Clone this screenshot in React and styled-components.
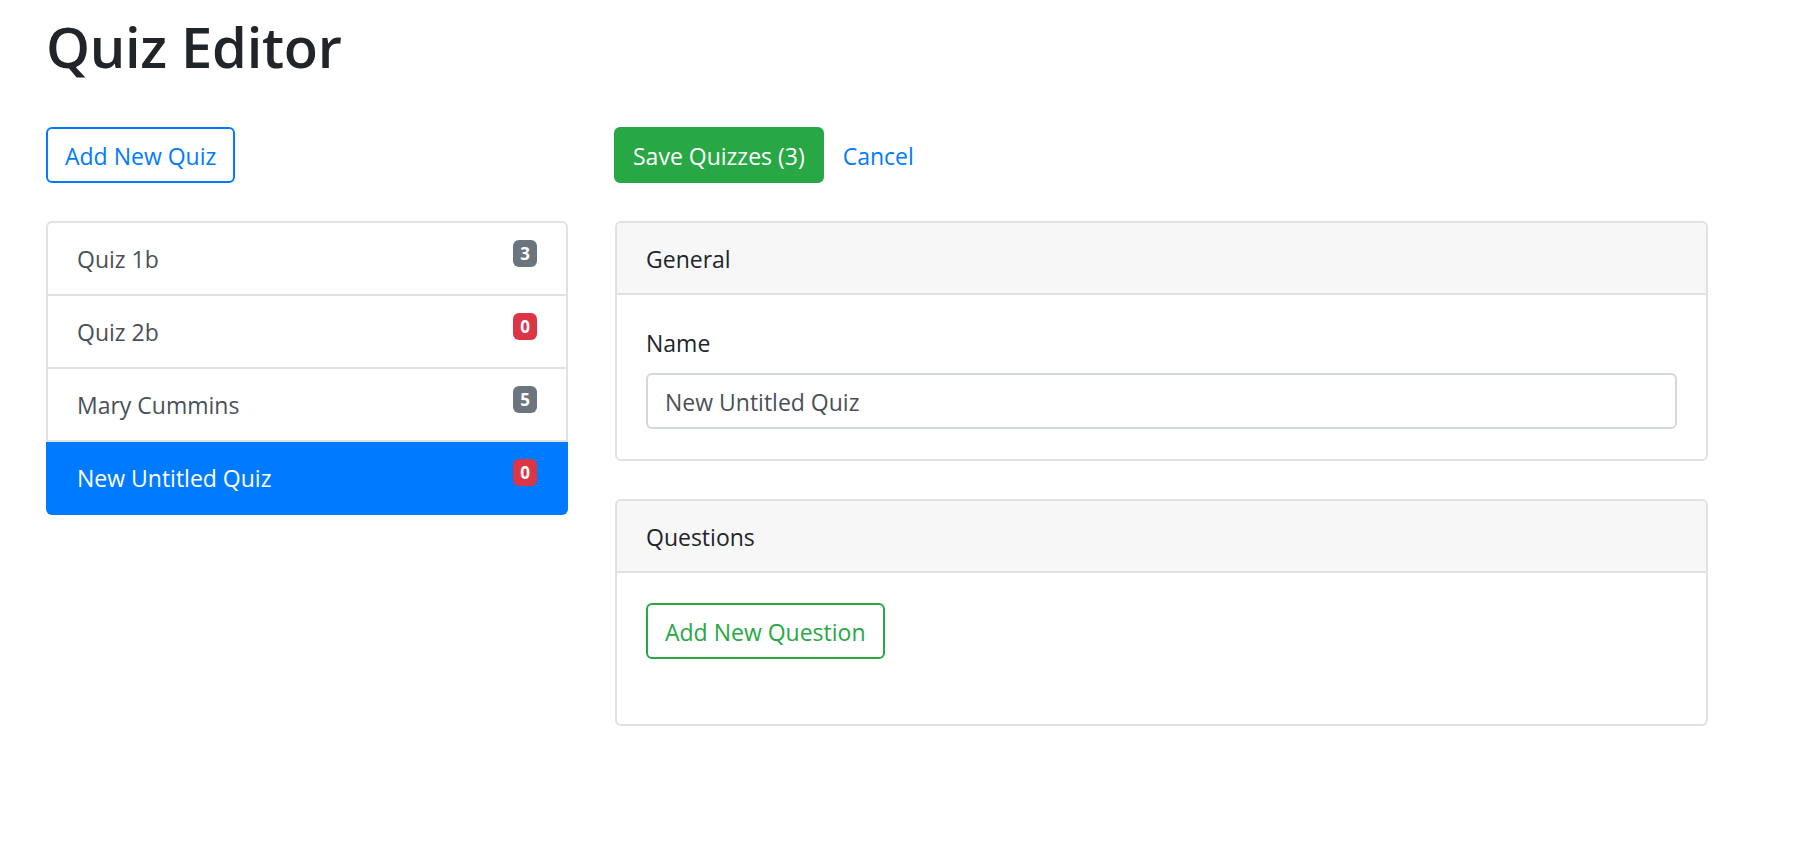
import React, { useState } from 'react'
import styled, { createGlobalStyle, css } from 'styled-components'

const GlobalStyle = createGlobalStyle`
    body {
        margin: 0;
        background: #fff;
        color: #212529;
        font-family: "Open Sans", "Noto Sans", sans-serif;
        font-size: 23px;
        line-height: 36px;
    }
    * {
        box-sizing: border-box;
    }
`

const quizzes = [
    { id: 1, name: 'Quiz 1b', count: 3 },
    { id: 2, name: 'Quiz 2b', count: 0 },
    { id: 3, name: 'Mary Cummins', count: 5 },
    { id: 4, name: 'New Untitled Quiz', count: 0 },
]

const App = () => {
    const [selected, setSelected] = useState(4)
    const current = quizzes.find(q => q.id === selected)

    return (
        <Page>
            <GlobalStyle />
            <Title>Quiz Editor</Title>

            <Columns>
                <section>
                    <Button variant='primary' outline>Add New Quiz</Button>

                    <QuizList>
                        {quizzes.map(q => (
                            <QuizItem
                                key={q.id}
                                active={q.id === selected}
                                onClick={() => setSelected(q.id)}
                            >
                                <span>{q.name}</span>
                                <Badge empty={q.count === 0}>{q.count}</Badge>
                            </QuizItem>
                        ))}
                    </QuizList>
                </section>

                <section>
                    <Toolbar>
                        <Button variant='success'>Save Quizzes (3)</Button>
                        <LinkButton>Cancel</LinkButton>
                    </Toolbar>

                    <Card>
                        <CardHeader>General</CardHeader>
                        <CardBody>
                            <Label htmlFor='quiz-name'>Name</Label>
                            <Input id='quiz-name' defaultValue={current.name} />
                        </CardBody>
                    </Card>

                    <Card>
                        <CardHeader>Questions</CardHeader>
                        <CardBody tall>
                            <Button variant='success' outline>Add New Question</Button>
                        </CardBody>
                    </Card>
                </section>
            </Columns>
        </Page>
    )
}

const colors = {
    primary: '#007bff',
    success: '#28a745',
}

const line = '#e1e1e1'

const Page = styled.main`
    width: 1708px;
    padding: 10px 0 40px 46px;
`

const Title = styled.h1`
    margin: 0 0 45px;
    font-size: 56px;
    font-weight: 600;
    line-height: 72px;
    letter-spacing: -0.3px;
    color: #212529;
`

const Columns = styled.div`
    display: grid;
    grid-template-columns: 522px 1093px;
    column-gap: 47px;
    align-items: start;
`

const Button = styled.button`
    display: inline-block;
    height: 56px;
    padding: 9px 17px 7px;
    font-family: inherit;
    font-size: 23px;
    line-height: 36px;
    border-radius: 6px;
    border: 2px solid ${p => colors[p.variant]};
    cursor: pointer;

    ${p => p.outline
        ? css`
            background: #fff;
            color: ${colors[p.variant]};
        `
        : css`
            background: ${colors[p.variant]};
            color: #fff;
        `}
`

const LinkButton = styled.button`
    height: 56px;
    padding: 10px 18px 8px;
    border: 1px solid transparent;
    background: none;
    font-family: inherit;
    font-size: 23px;
    line-height: 36px;
    color: #007bff;
    cursor: pointer;
`

const Toolbar = styled.div`
    display: flex;
    align-items: center;
    margin-left: -1px;
`

const QuizList = styled.ul`
    list-style: none;
    margin: 38px 0 0;
    padding: 0;
    border-radius: 6px;
`

const QuizItem = styled.li`
    display: flex;
    justify-content: space-between;
    align-items: flex-start;
    padding: 18px 29px 17px;
    line-height: 36px;
    border: 2px solid ${line};
    color: #495057;
    background: #fff;
    cursor: pointer;

    & + & {
        border-top-width: 0;
    }

    &:first-child {
        border-radius: 6px 6px 0 0;
    }

    &:last-child {
        border-radius: 0 0 6px 6px;
    }

    ${p => p.active && css`
        background: #007bff;
        border-color: #007bff;
        color: #fff;
    `}
`

const Badge = styled.span`
    display: inline-block;
    margin-top: -1px;
    padding: 4.5px 7px;
    border-radius: 6px;
    font-size: 17px;
    font-weight: 700;
    line-height: 18px;
    color: #fff;
    background: ${p => p.empty ? '#dc3545' : '#6c757d'};
`

const Card = styled.div`
    margin-top: 38px;
    border: 2px solid ${line};
    border-radius: 6px;
    background: #fff;
    overflow: hidden;
`

const CardHeader = styled.div`
    padding: 18px 29px 16px;
    line-height: 36px;
    background: #f7f7f7;
    border-bottom: 2px solid ${line};
    color: #212529;
`

const CardBody = styled.div`
    padding: ${p => p.tall ? '30px 29px 65px' : '30px 29px'};
`

const Label = styled.label`
    display: block;
    margin-bottom: 12px;
    line-height: 36px;
    color: #212529;
`

const Input = styled.input`
    display: block;
    width: 100%;
    height: 56px;
    padding: 9px 17px 7px;
    font-family: inherit;
    font-size: 23px;
    line-height: 36px;
    color: #495057;
    border: 2px solid #d3d8dd;
    border-radius: 6px;
    outline: none;
`

export default App
